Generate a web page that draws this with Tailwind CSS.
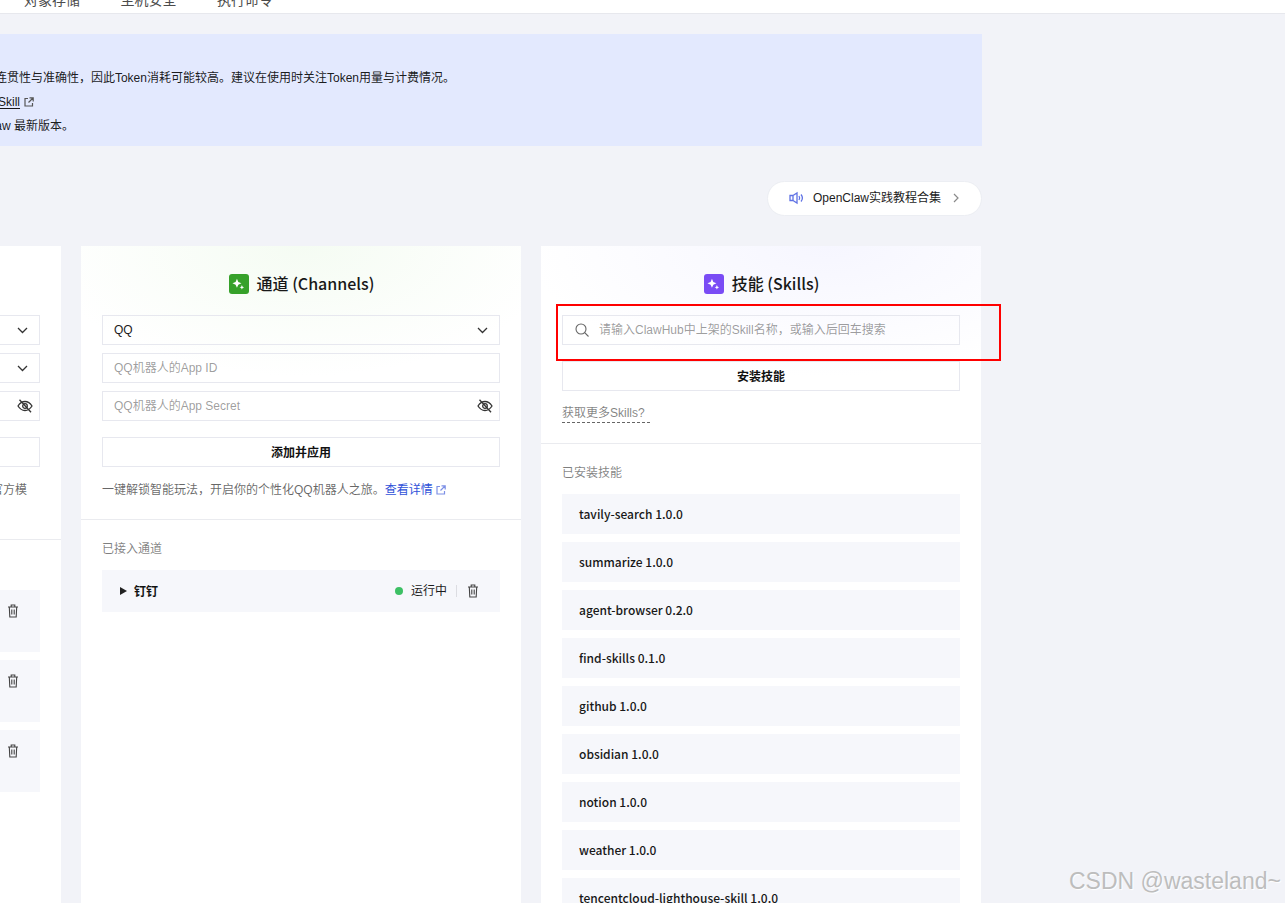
<!DOCTYPE html>
<html lang="zh-CN">
<head>
    <meta charset="UTF-8">
    <title>OpenClaw</title>
    <script src="https://cdn.jsdelivr.net/npm/@tailwindcss/browser@4"></script>
</head>
<body class="bg-[#f2f3f8] font-['Liberation_Sans','Noto_Sans_CJK_SC',sans-serif] text-[12px] text-[#000000e6] overflow-hidden">
<div class="relative h-[903px] w-[1285px] overflow-hidden">

    <!-- top tabs, page is scrolled so only the bottom shows -->
    <div class="h-[14px] bg-white border-b border-[#e7e8ed] overflow-hidden">
        <div class="flex gap-[40.5px] pl-[24px] mt-[-10px] text-[14px] leading-[20px] text-[#4b4b4b]">
            <span>对象存储</span><span>主机安全</span><span>执行命令</span>
        </div>
    </div>

    <div class="ml-[-379px] w-[1361px]">
        <!-- notice -->
        <div class="mt-[20px] h-[112px] bg-[#e3e9fe] pt-[32px] text-[12px] leading-[24px] whitespace-nowrap">
            <p class="w-[834px] text-right">请注意，为保证上下文的连贯性与准确性，因此Token消耗可能较高。建议在使用时关注Token用量与计费情况。</p>
            <p class="w-[413px] flex items-center justify-end"><span class="underline underline-offset-2">如何安装Skill</span>
                <svg class="ml-[4px]" width="10" height="10" viewBox="0 0 10 10" fill="none" stroke="#555" stroke-width="1.2"><path d="M4 1.500H1v7.500h7.500V6M5.500 .8H9.200V4.500M9 1 4.500 5.500"/></svg></p>
            <p class="w-[453px] text-right">请及时升级到 OpenClaw 最新版本。</p>
        </div>

        <!-- tutorial link -->
        <div class="flex justify-end mt-[35px]">
            <a class="h-[35px] w-[215px] rounded-full bg-white border border-[#eceef3] flex items-center pl-[21px] pb-[1px]">
                <svg width="16" height="14" viewBox="0 0 16 14" fill="none" stroke="#5f72e4" stroke-width="1.300"><path d="M1 4.500h3v5H1zM4 4.500 8 2v10L4 9.500M10 5c.8 1.200.8 2.800 0 4M12 3.500c1.600 2 1.600 5 0 7"/></svg>
                <span class="ml-[8px] text-[12px] text-[#1c1c1c] w-[128px] whitespace-nowrap">OpenClaw实践教程合集</span>
                <svg class="ml-[11px]" width="8" height="10" viewBox="0 0 8 10" fill="none" stroke="#8a8a8a" stroke-width="1.2"><path d="M2 1l4 4-4 4"/></svg>
            </a>
        </div>

        <!-- three columns -->
        <div class="mt-[30px] grid grid-cols-[440px_440px_440px] gap-[20px] items-start">

            <!-- column 1, mostly scrolled off -->
            <section class="h-[700px] bg-white bg-[radial-gradient(ellipse_300px_110px_at_0px_0px,#f6f6ff,#ffffff)]">
                <div class="h-[69px]"></div>
                <div class="px-[21px] flex flex-col gap-[8px]">
                    <div class="h-[30px] border border-[#e7e8ef] flex items-center justify-end pr-[11px]">
                        <svg width="11" height="7" viewBox="0 0 11 7" fill="none" stroke="#333" stroke-width="1.3"><path d="M1 1l4.500 4.500L10 1"/></svg>
                    </div>
                    <div class="h-[30px] border border-[#e7e8ef] flex items-center justify-end pr-[11px]">
                        <svg width="11" height="7" viewBox="0 0 11 7" fill="none" stroke="#333" stroke-width="1.3"><path d="M1 1l4.500 4.500L10 1"/></svg>
                    </div>
                    <div class="h-[30px] border border-[#e7e8ef] flex items-center justify-end pr-[6px]">
                        <svg width="16" height="14" viewBox="0 0 16 14" fill="none" stroke="#333" stroke-width="1.300"><path d="M1 7c2-3.200 4.300-4.500 7-4.500S13 3.800 15 7c-2 3.200-4.300 4.500-7 4.500S3 10.200 1 7z"/><circle cx="8" cy="7" r="2.300"/><path d="M2.500 .8l11.500 12.500"/></svg>
                    </div>
                    <div class="h-[30px] mt-[8px] border border-[#e7e8ef]"></div>
                </div>
                <p class="mt-[13px] pr-[34px] text-right text-[#00000099] leading-[20px] h-[39px] whitespace-nowrap">添加后即可使用官方模</p>
                <div class="mt-[20px] border-t border-[#eaebef] px-[21px] pt-[50px] flex flex-col gap-[8px]">
                    <div class="h-[62px] bg-[#f6f7fb] flex justify-end pt-[14px] pr-[21px]"><svg width="12" height="14" viewBox="0 0 12 14" fill="none" stroke="#444" stroke-width="1.100"><path d="M1 3h10M4.200 3V1h3.600v2M2.300 3l.5 10h6.400l.5-10M4.800 5.500v5M7.200 5.500v5"/></svg></div>
                    <div class="h-[62px] bg-[#f6f7fb] flex justify-end pt-[14px] pr-[21px]"><svg width="12" height="14" viewBox="0 0 12 14" fill="none" stroke="#444" stroke-width="1.100"><path d="M1 3h10M4.200 3V1h3.600v2M2.300 3l.5 10h6.400l.5-10M4.800 5.500v5M7.200 5.500v5"/></svg></div>
                    <div class="h-[62px] bg-[#f6f7fb] flex justify-end pt-[14px] pr-[21px]"><svg width="12" height="14" viewBox="0 0 12 14" fill="none" stroke="#444" stroke-width="1.100"><path d="M1 3h10M4.200 3V1h3.600v2M2.300 3l.5 10h6.400l.5-10M4.800 5.500v5M7.200 5.500v5"/></svg></div>
                </div>
            </section>

            <!-- channels -->
            <section class="h-[700px] bg-white bg-[radial-gradient(ellipse_260px_130px_at_50%_0px,#f5fcf3,#ffffff)]">
                <div class="h-[69px] pt-[27px] pl-[1px] flex items-start justify-center gap-[8px]">
                    <span class="mt-[1px] w-[20px] h-[20px] rounded-[3px] bg-[#36a12a] flex items-center justify-center">
                        <svg width="14" height="14" viewBox="0 0 14 14" fill="#fff"><path d="M5.500 2 7 5.500 10.500 7 7 8.500 5.500 12 4 8.500.5 7 4 5.500zM11 9l.8 1.700 1.700.8-1.700.8L11 14l-.8-1.700-1.700-.8 1.700-.8z" transform="scale(.9)"/></svg>
                    </span>
                    <h2 class="font-['Noto_Sans_CJK_SC'] text-[16px] leading-[20px] font-medium text-[#181818]">通道 (Channels)</h2>
                </div>
                <div class="px-[21px] flex flex-col gap-[8px]">
                    <div class="h-[30px] border border-[#e7e8ef] flex items-center justify-between pl-[11px] pr-[11px] text-[#1c1c1c]">QQ
                        <svg width="11" height="7" viewBox="0 0 11 7" fill="none" stroke="#333" stroke-width="1.3"><path d="M1 1l4.500 4.500L10 1"/></svg>
                    </div>
                    <div class="h-[30px] border border-[#e7e8ef] flex items-center pl-[11px] text-[#00000066]">QQ机器人的App ID</div>
                    <div class="h-[30px] border border-[#e7e8ef] flex items-center justify-between pl-[11px] pr-[6px] text-[#00000066]">QQ机器人的App Secret
                        <svg width="16" height="14" viewBox="0 0 16 14" fill="none" stroke="#333" stroke-width="1.300"><path d="M1 7c2-3.200 4.300-4.500 7-4.500S13 3.800 15 7c-2 3.200-4.300 4.500-7 4.500S3 10.200 1 7z"/><circle cx="8" cy="7" r="2.300"/><path d="M2.500 .8l11.500 12.500"/></svg>
                    </div>
                    <button class="h-[30px] mt-[8px] pt-[1px] border border-[#e7e8ef] font-bold text-[#111]">添加并应用</button>
                </div>
                <p class="mt-[13px] px-[21px] leading-[20px] h-[20px] text-[#00000099] flex items-center whitespace-nowrap">一键解锁智能玩法，开启你的个性化QQ机器人之旅。<span class="text-[#2f52d9]">查看详情</span>
                    <svg class="ml-[3px]" width="10" height="10" viewBox="0 0 10 10" fill="none" stroke="#7d90e6" stroke-width="1.200"><path d="M4 1.500H1v7.500h7.500V6M5.500 .8H9.200V4.500M9 1 4.500 5.500"/></svg></p>
                <div class="mt-[19px] border-t border-[#eaebef] px-[21px] pt-[19px]">
                    <h3 class="leading-[20px] text-[#00000080]">已接入通道</h3>
                    <div class="mt-[11px] h-[42px] bg-[#f6f7fb] flex items-center pl-[18px] pr-[21px]">
                        <svg width="7" height="8" viewBox="0 0 7 8" fill="#222"><path d="M0 0l7 4-7 4z"/></svg>
                        <span class="ml-[7px] pt-[1px] font-bold text-[#111]">钉钉</span>
                        <span class="ml-auto w-[8px] h-[8px] rounded-full bg-[#3cc064]"></span>
                        <span class="ml-[8px] text-[#1c1c1c]">运行中</span>
                        <span class="ml-[9px] mr-[10px] h-[12px] border-l border-[#dcdde2]"></span>
                        <svg width="12" height="14" viewBox="0 0 12 14" fill="none" stroke="#444" stroke-width="1.100"><path d="M1 3h10M4.200 3V1h3.600v2M2.300 3l.5 10h6.400l.5-10M4.800 5.500v5M7.200 5.500v5"/></svg>
                    </div>
                </div>
            </section>

            <!-- skills -->
            <section class="h-[700px] bg-white bg-[radial-gradient(ellipse_300px_130px_at_65%_0px,#f6f6ff,#ffffff)]">
                <div class="h-[69px] pt-[27px] pl-[1px] flex items-start justify-center gap-[8px]">
                    <span class="mt-[1px] w-[20px] h-[20px] rounded-[3px] bg-[#7a4cf5] flex items-center justify-center">
                        <svg width="14" height="14" viewBox="0 0 14 14" fill="#fff"><path d="M5.500 2 7 5.500 10.500 7 7 8.500 5.500 12 4 8.500.5 7 4 5.500zM11 9l.8 1.700 1.700.8-1.700.8L11 14l-.8-1.700-1.700-.8 1.700-.8z" transform="scale(.9)"/></svg>
                    </span>
                    <h2 class="font-['Noto_Sans_CJK_SC'] text-[16px] leading-[20px] font-medium text-[#181818]">技能 (Skills)</h2>
                </div>
                <div class="px-[21px] flex flex-col gap-[16px]">
                    <div class="h-[30px] border border-[#e7e8ef] flex items-center pl-[12px] text-[#00000066]">
                        <svg width="14" height="14" viewBox="0 0 14 14" fill="none" stroke="#666" stroke-width="1.100"><circle cx="6" cy="6" r="5"/><path d="M9.700 9.700l3.800 3.800"/></svg>
                        <span class="ml-[10px]">请输入ClawHub中上架的Skill名称，或输入后回车搜索</span>
                    </div>
                    <button class="h-[30px] pt-[1px] border border-[#e7e8ef] font-bold text-[#111]">安装技能</button>
                </div>
                <div class="px-[21px] mt-[12px] h-[20px]">
                    <span class="inline-block leading-[20px] h-[20px] w-[88px] border-b border-dashed border-[#666] text-[#00000080]">获取更多Skills?</span>
                </div>
                <div class="mt-[20px] border-t border-[#eaebef] px-[21px] pt-[19px]">
                    <h3 class="leading-[20px] text-[#00000080]">已安装技能</h3>
                    <ul class="mt-[11px] flex flex-col gap-[8px] font-['Noto_Sans_CJK_SC'] font-medium text-[#181818]">
                        <li class="h-[40px] bg-[#f6f7fb] flex items-center pl-[17px]">tavily-search 1.0.0</li>
                        <li class="h-[40px] bg-[#f6f7fb] flex items-center pl-[17px]">summarize 1.0.0</li>
                        <li class="h-[40px] bg-[#f6f7fb] flex items-center pl-[17px]">agent-browser 0.2.0</li>
                        <li class="h-[40px] bg-[#f6f7fb] flex items-center pl-[17px]">find-skills 0.1.0</li>
                        <li class="h-[40px] bg-[#f6f7fb] flex items-center pl-[17px]">github 1.0.0</li>
                        <li class="h-[40px] bg-[#f6f7fb] flex items-center pl-[17px]">obsidian 1.0.0</li>
                        <li class="h-[40px] bg-[#f6f7fb] flex items-center pl-[17px]">notion 1.0.0</li>
                        <li class="h-[40px] bg-[#f6f7fb] flex items-center pl-[17px]">weather 1.0.0</li>
                        <li class="h-[40px] bg-[#f6f7fb] flex items-center pl-[17px]">tencentcloud-lighthouse-skill 1.0.0</li>
                    </ul>
                </div>
            </section>
        </div>
    </div>

    <!-- annotation box and watermark sit over the page -->
    <div class="absolute left-[556px] top-[304px] w-[445px] h-[57px] border-2 border-[#ff0000]"></div>
    <div class="absolute left-[1069px] top-[867px] whitespace-nowrap font-['Liberation_Sans'] text-[23px] leading-[28px] text-[#bdbdbd] [text-shadow:1px_1px_1px_#fff]">CSDN @wasteland~</div>
</div>
</body>
</html>
